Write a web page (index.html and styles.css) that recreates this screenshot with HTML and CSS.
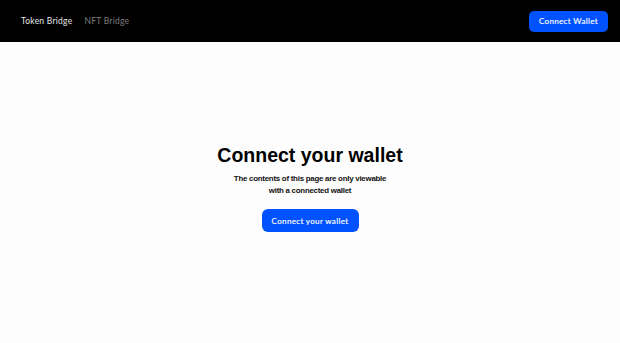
FILE: index.html
```html
<!DOCTYPE html>
<html lang="en">
<head>
    <meta charset="UTF-8">
    <meta name="viewport" content="width=device-width, initial-scale=1.0">
    <title>Bridge</title>
    <link rel="stylesheet" href="styles.css">
</head>
<body>
    <header class="topbar">
        <nav class="nav">
            <a class="nav-link active" href="#">Token Bridge</a>
            <a class="nav-link" href="#">NFT Bridge</a>
        </nav>
        <button class="btn btn-small">Connect Wallet</button>
    </header>

    <main class="content">
        <h1 class="title">Connect your wallet</h1>
        <p class="subtitle">The contents of this page are only viewable<br>with a connected wallet</p>
        <button class="btn btn-main">Connect your wallet</button>
    </main>
</body>
</html>
```

FILE: styles.css
```css
* {
    box-sizing: border-box;
}
body {
    margin: 0;
    background: #fdfdfd;
    font-family: "Lato", "Liberation Sans", sans-serif;
    color: #000;
}
.topbar {
    height: 42px;
    background: #000;
    display: flex;
    align-items: center;
    justify-content: space-between;
    padding: 0 12px 0 21px;
}
.nav {
    display: flex;
    gap: 12px;
}
.nav-link {
    font-size: 8.5px;
    color: #7d7d7d;
    text-decoration: none;
    letter-spacing: 0.25px;
}
.nav-link.active {
    color: #e6e6e6;
}
.btn {
    border: none;
    background: #0052ff;
    color: #fff;
    font-family: inherit;
    cursor: pointer;
}
.btn-small {
    width: 79px;
    height: 21px;
    border-radius: 5px;
    font-size: 8px;
    font-weight: 400;
    letter-spacing: 0.35px;
    -webkit-text-stroke: 0.15px #fff;
}
.content {
    display: flex;
    flex-direction: column;
    align-items: center;
    padding-top: 101px;
}
.title {
    margin: 0;
    font-family: "Liberation Sans", Arial, sans-serif;
    font-size: 19.5px;
    font-weight: 700;
    line-height: 24px;
}
.subtitle {
    margin: 6px 0 0;
    font-family: "Liberation Sans", Arial, sans-serif;
    font-size: 7.9px;
    font-weight: 700;
    letter-spacing: -0.25px;
    line-height: 12px;
    text-align: center;
    color: #111;
}
.btn-main {
    margin-top: 12px;
    width: 97px;
    height: 23px;
    border-radius: 6px;
    font-size: 8px;
    font-weight: 400;
    letter-spacing: 0.35px;
    -webkit-text-stroke: 0.15px #fff;
}
```
